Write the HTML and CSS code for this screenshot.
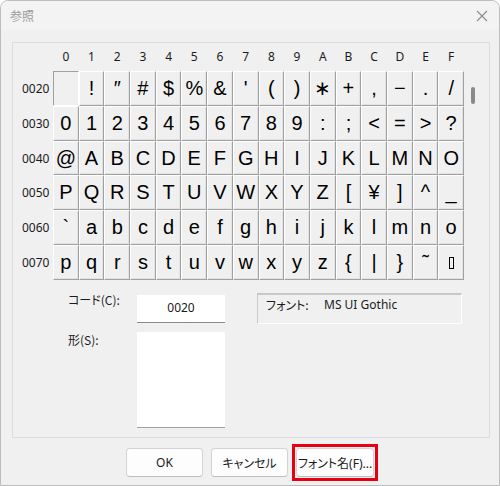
FILE: index.html
```html
<!DOCTYPE html>
<html lang="ja">
<head>
<meta charset="utf-8">
<link rel="stylesheet" href="styles.css">
</head>
<body>
<div class="window">
  <div class="titlebar">
    <span class="title">参照</span>
    <svg class="close" width="12" height="12" viewBox="0 0 12 12"><path d="M1 1 L11 11 M11 1 L1 11" stroke="#8c8c8c" stroke-width="1.1" fill="none"/></svg>
  </div>
  <div class="content">
    <div class="panel">
      <div class="map">
        <div class="head">
          <span></span><span>0</span><span>1</span><span>2</span><span>3</span><span>4</span><span>5</span><span>6</span><span>7</span><span>8</span><span>9</span><span>A</span><span>B</span><span>C</span><span>D</span><span>E</span><span>F</span>
        </div>
        <div class="body">
          <div class="labels">
            <span>0020</span><span>0030</span><span>0040</span><span>0050</span><span>0060</span><span>0070</span>
          </div>
          <div class="grid">
            <div class="cell sel"></div><div class="cell">!</div><div class="cell">″</div><div class="cell">#</div><div class="cell">$</div><div class="cell">%</div><div class="cell">&amp;</div><div class="cell">'</div><div class="cell">(</div><div class="cell">)</div><div class="cell">∗</div><div class="cell">+</div><div class="cell">,</div><div class="cell">−</div><div class="cell">.</div><div class="cell">/</div>
            <div class="cell">0</div><div class="cell">1</div><div class="cell">2</div><div class="cell">3</div><div class="cell">4</div><div class="cell">5</div><div class="cell">6</div><div class="cell">7</div><div class="cell">8</div><div class="cell">9</div><div class="cell">:</div><div class="cell">;</div><div class="cell">&lt;</div><div class="cell">=</div><div class="cell">&gt;</div><div class="cell">?</div>
            <div class="cell">@</div><div class="cell">A</div><div class="cell">B</div><div class="cell">C</div><div class="cell">D</div><div class="cell">E</div><div class="cell">F</div><div class="cell">G</div><div class="cell">H</div><div class="cell">I</div><div class="cell">J</div><div class="cell">K</div><div class="cell">L</div><div class="cell">M</div><div class="cell">N</div><div class="cell">O</div>
            <div class="cell">P</div><div class="cell">Q</div><div class="cell">R</div><div class="cell">S</div><div class="cell">T</div><div class="cell">U</div><div class="cell">V</div><div class="cell">W</div><div class="cell">X</div><div class="cell">Y</div><div class="cell">Z</div><div class="cell">[</div><div class="cell">¥</div><div class="cell">]</div><div class="cell">^</div><div class="cell">_</div>
            <div class="cell">`</div><div class="cell">a</div><div class="cell">b</div><div class="cell">c</div><div class="cell">d</div><div class="cell">e</div><div class="cell">f</div><div class="cell">g</div><div class="cell">h</div><div class="cell">i</div><div class="cell">j</div><div class="cell">k</div><div class="cell">l</div><div class="cell">m</div><div class="cell">n</div><div class="cell">o</div>
            <div class="cell">p</div><div class="cell">q</div><div class="cell">r</div><div class="cell">s</div><div class="cell">t</div><div class="cell">u</div><div class="cell">v</div><div class="cell">w</div><div class="cell">x</div><div class="cell">y</div><div class="cell">z</div><div class="cell">{</div><div class="cell">|</div><div class="cell">}</div><div class="cell">˜</div><div class="cell"><span class="del"></span></div>
          </div>
          <div class="scroll"><div class="thumb"></div></div>
        </div>
      </div>
      <div class="lower">
        <span class="label l1">コード(C):</span>
        <div class="codebox">0020</div>
        <div class="fontbox"><span class="fk">フォント:</span><span class="fv">MS UI Gothic</span></div>
        <span class="label l2">形(S):</span>
        <div class="shapebox"></div>
      </div>
    </div>
    <div class="buttons">
      <button class="btn">OK</button>
      <button class="btn">キャンセル</button>
      <span class="hlwrap"><button class="btn wide">フォント名(F)...</button></span>
    </div>
  </div>
</div>
</body>
</html>
```
FILE: styles.css
```css
* { box-sizing: border-box; }
html, body { margin: 0; padding: 0; background: #ffffff; }
body {
  font-family: "Noto Sans", "Noto Sans CJK JP", sans-serif;
  font-size: 12px;
  color: #1b1b1b;
}
.window {
  width: 500px;
  height: 486px;
  border: 1px solid #bcbcbc;
  border-radius: 8px 8px 0 0;
  background: #f0f0f0;
  overflow: hidden;
  display: flex;
  flex-direction: column;
}
.titlebar {
  height: 29px;
  background: #f3f3f3;
  display: flex;
  align-items: center;
  justify-content: space-between;
  padding: 0 11px 0 9px;
  flex: none;
}
.title {
  font-family: "Noto Sans CJK JP", sans-serif;
  font-feature-settings: "palt";
  font-size: 12px;
  color: #9b9b9b;
}
.close { display: block; }
.content {
  flex: 1;
  display: flex;
  flex-direction: column;
  padding: 12px 9px 0 11px;
}
.panel {
  height: 396px;
  border: 1px solid #dcdcdc;
  padding-left: 9px;
  display: flex;
  flex-direction: column;
}
.head {
  display: grid;
  grid-template-columns: 31px repeat(16, 25.6875px);
  height: 28px;
  line-height: 27px;
  text-align: center;
  font-size: 12px;
}
.body { display: flex; }
.labels {
  width: 31px;
  display: grid;
  grid-template-rows: repeat(6, 1fr);
  align-items: center;
  font-size: 12px;
}
.grid {
  width: 411px;
  height: 209px;
  display: grid;
  grid-template-columns: repeat(16, 1fr);
  grid-template-rows: repeat(6, 1fr);
  background: #f0f0f0;
}
.cell {
  display: flex;
  align-items: center;
  justify-content: center;
  font-family: "Liberation Sans", "Noto Sans CJK JP", sans-serif;
  font-size: 20px;
  color: #000;
  background: #f0f0f0;
  border-top: 1px solid #ffffff;
  border-left: 1px solid #ffffff;
  border-right: 1px solid #a0a0a0;
  border-bottom: 1px solid #a0a0a0;
  box-shadow: inset -1px -1px 0 #e3e3e3;
}
.cell.sel {
  border-top: 1px solid #a0a0a0;
  border-left: 1px solid #a0a0a0;
  border-right: 1px solid #ffffff;
  border-bottom: 1px solid #ffffff;
  box-shadow: none;
}
.del {
  display: inline-block;
  width: 5px;
  height: 12px;
  border: 1px solid #000;
}
.scroll {
  width: 18px;
  padding-left: 7px;
  padding-top: 16px;
}
.thumb {
  width: 4px;
  height: 17px;
  border-radius: 2px;
  background: #8a8a8a;
}
.lower {
  display: grid;
  grid-template-columns: 69px 88px 32px 205px;
  grid-template-rows: 30px 96px;
  row-gap: 9px;
  margin-left: 46px;
  margin-top: 13px;
}
.label {
  grid-column: 1;
  font-family: "Noto Sans CJK JP", sans-serif;
  font-feature-settings: "palt";
  line-height: 14px;
}
.l1 { grid-row: 1; }
.l2 { grid-row: 2; margin-top: 1px; }
.codebox {
  grid-column: 2;
  grid-row: 1;
  margin-top: 2px;
  height: 28px;
  background: #ffffff;
  border-bottom: 1px solid #8a8a8a;
  text-align: center;
  line-height: 25px;
}
.shapebox {
  grid-column: 2;
  grid-row: 2;
  background: #ffffff;
  border-bottom: 1px solid #a0a0a0;
}
.fontbox {
  grid-column: 4;
  grid-row: 1;
  height: 31px;
  border-top: 2px solid #c8c8c8;
  border-left: 1px solid #c8c8c8;
  border-right: 1px solid #ffffff;
  border-bottom: 1px solid #ffffff;
  display: flex;
  padding: 2px 0 0 8px;
  line-height: 16px;
}
.fk { font-family: "Noto Sans CJK JP", sans-serif; font-feature-settings: "palt"; width: 58px; }
.fv { font-family: "Noto Sans", sans-serif; }
.buttons {
  display: flex;
  justify-content: center;
  align-items: flex-start;
  gap: 8px;
  margin-top: 10px;
  margin-right: 2px;
}
.btn {
  width: 77px;
  height: 29px;
  margin: 0;
  background: #fdfdfd;
  border: 1px solid #d3d3d3;
  border-bottom-color: #bdbdbd;
  border-radius: 4px;
  font-family: "Noto Sans", "Noto Sans CJK JP", sans-serif;
  font-feature-settings: "palt";
  font-size: 12px;
  color: #1b1b1b;
  padding: 0;
  white-space: nowrap;
}
.btn.wide { width: 78px; display: block; }
.hlwrap {
  display: block;
  margin: -4px;
  padding: 1px;
  border: 3px solid #e60012;
}
```
